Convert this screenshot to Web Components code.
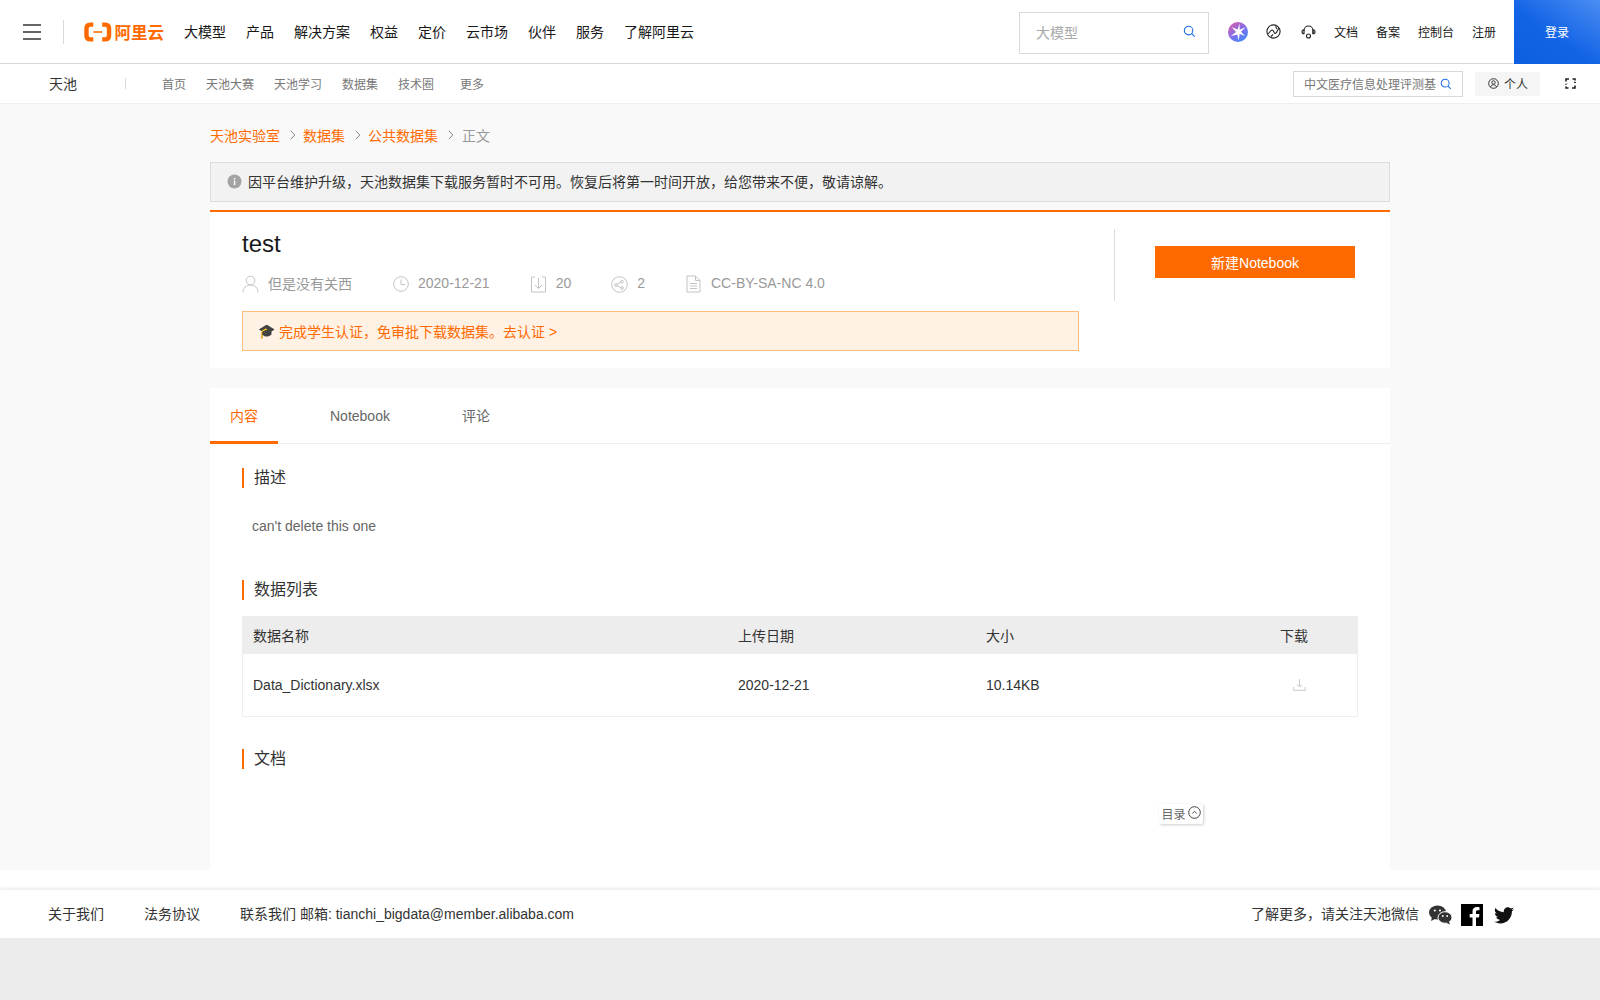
<!DOCTYPE html>
<html lang="zh">
<head>
<meta charset="UTF-8">
<title>天池</title>
<style>
  html, body { margin: 0; padding: 0; }
  body {
    background: #f9f9f9; color: #333; height: 1000px; overflow: hidden;
    font-family: "Liberation Sans", "Noto Sans CJK SC", sans-serif; font-size: 14px;
  }
</style>
</head>
<body>
<ali-topbar></ali-topbar>
<tc-subnav></tc-subnav>
<tc-page>
  <tc-breadcrumb></tc-breadcrumb>
  <tc-notice>因平台维护升级，天池数据集下载服务暂时不可用。恢复后将第一时间开放，给您带来不便，敬请谅解。</tc-notice>
  <ds-header></ds-header>
  <ds-content>
    <ds-section title="描述"><p class="desc">can't delete this one</p></ds-section>
    <ds-section title="数据列表"><ds-table></ds-table></ds-section>
    <ds-section title="文档"></ds-section>
  </ds-content>
</tc-page>
<tc-footer></tc-footer>

<script>
// 공통 아이콘
const searchIcon = (size, color) => `<svg width="${size}" height="${size}" viewBox="0 0 14 14" fill="none" stroke="${color}" stroke-width="1.2"><circle cx="6" cy="6" r="4.6"/><path d="M9.4 9.4L12.6 12.6"/></svg>`;
const chevron = `<svg width="6" height="10" viewBox="0 0 6 10" fill="none" stroke="#888"><path d="M.8.8l4 4.200-4 4.200"/></svg>`;

function define(name, html) {
  customElements.define(name, class extends HTMLElement {
    constructor() {
      super();
      this.attachShadow({ mode: 'open' }).innerHTML = html;
    }
  });
}

// 상단 바
define('ali-topbar', `
  <style>
    :host { display: flex; align-items: center; height: 63px; background: #fff; border-bottom: 1px solid #d9d9d9; color: #181818; }
    .burger { width: 18px; margin-left: 23px; display: flex; flex-direction: column; gap: 5px; }
    .burger i { display: block; height: 2px; background: #666; }
    .sep { width: 1px; height: 24px; background: #d9d9d9; margin: 0 20px 0 22px; }
    .logo { display: flex; align-items: center; gap: 3px; color: #ff6a00; font-size: 16.5px; font-weight: 700; width: 80px; white-space: nowrap; }
    nav { display: flex; gap: 20px; margin-left: 20px; padding-bottom: 1px; }
    .search { margin-left: auto; margin-top: 2px; box-sizing: border-box; width: 190px; height: 42px; border: 1px solid #d9d9d9; display: flex; align-items: center; justify-content: space-between; padding: 0 12px 2px 16px; color: #aaa; }
    .search svg { display: block; }
    .tools { display: flex; align-items: center; margin-left: 19px; }
    .tools svg { display: block; }
    .star { margin-right: 18px; }
    .globe { margin-right: 20px; }
    .head { margin-right: 18px; }
    .links { display: flex; gap: 18px; font-size: 12px; margin-right: 18px; }
    .login { width: 86px; height: 64px; margin-bottom: -1px; padding-bottom: 2px; box-sizing: border-box; display: flex; align-items: center; justify-content: center; color: #fff; font-size: 12px; background: linear-gradient(215deg, #4b8df2 0%, #1263e6 55%, #0d5fe2 100%); }
  </style>
  <div class="burger"><i></i><i></i><i></i></div>
  <div class="sep"></div>
  <div class="logo">
    <svg width="28" height="20" viewBox="0 0 28 20" fill="none"><path d="M9.5 2.5H6.5C4 2.5 2.5 4 2.5 6.5V13.5C2.5 16 4 17.5 6.5 17.5H9.5M18.5 2.5H21.5C24 2.5 25.5 4 25.5 6.5V13.5C25.5 16 24 17.5 21.5 17.5H18.5" stroke="#ff6a00" stroke-width="4.5"/><path d="M9.5 10H18.5" stroke="#ff6a00" stroke-width="1.6"/></svg>
    <span>阿里云</span>
  </div>
  <nav><span>大模型</span><span>产品</span><span>解决方案</span><span>权益</span><span>定价</span><span>云市场</span><span>伙伴</span><span>服务</span><span>了解阿里云</span></nav>
  <div class="search"><span>大模型</span>${searchIcon(13, '#1f6fe5')}</div>
  <div class="tools">
    <svg class="star" width="20" height="20" viewBox="0 0 20 20">
      <defs><linearGradient id="g" x1="0.15" y1="0.1" x2="0.8" y2="1"><stop offset="0" stop-color="#d060b0"/><stop offset="0.5" stop-color="#7f6cf0"/><stop offset="1" stop-color="#3a8df6"/></linearGradient></defs>
      <circle cx="10" cy="10" r="10" fill="url(#g)"/>
      <path d="M11.6 1.5L9.6 7.6 3.6 5 8 10 2.6 14.2 9.3 12.4 10.6 18.4 11.7 12 17 14 13 9.8 17.8 5.2 11.7 7.8Z" fill="#fff"/>
    </svg>
    <svg class="globe" width="15" height="15" viewBox="0 0 15 15" fill="none" stroke="#222" stroke-width="1.1"><circle cx="7.5" cy="7.5" r="6.6"/><path d="M1.5 9.8C3.5 10 4 6 6.2 6S7.5 10 9.5 9.3 11 5 13.3 4.3"/><path d="M9.5 2.5L11 5M5 12.5L7 10.5"/></svg>
    <svg class="head" width="15" height="14" viewBox="0 0 15 14" fill="none" stroke="#222" stroke-width="1.1"><path d="M3 6V5.5a4.5 4.5 0 0 1 9 0V9"/><path d="M3 4.8C1.8 4.8 1 5.7 1 6.8S1.8 8.800 3 8.800ZM12 4.800C13.200 4.800 14 5.700 14 6.800S13.200 8.800 12 8.800Z"/><circle cx="7.5" cy="11" r="2"/></svg>
    <div class="links"><span>文档</span><span>备案</span><span>控制台</span><span>注册</span></div>
  </div>
  <div class="login">登录</div>
`);

// 서브 내비
define('tc-subnav', `
  <style>
    :host { display: flex; align-items: center; height: 39px; background: #fff; border-bottom: 1px solid #eee; font-size: 12px; color: #777; }
    .brand { font-size: 14px; color: #333; margin-left: 49px; width: 76px; padding-bottom: 1px; }
    .sep { width: 1px; height: 11px; background: #d9d9d9; }
    nav { display: flex; gap: 20px; margin-left: 36px; }
    nav .more { margin-left: 6px; }
    .search { margin-left: auto; box-sizing: border-box; width: 170px; height: 26px; border: 1px solid #d9d9d9; display: flex; align-items: center; justify-content: space-between; padding: 0 10px; color: #777; white-space: nowrap; }
    .mine { box-sizing: border-box; width: 65px; height: 24px; margin-left: 12px; background: #f5f5f5; color: #333; display: flex; align-items: center; gap: 5px; padding-left: 13px; }
    .swap { margin: 0 24px 0 25px; }
    svg { display: block; flex: none; }
  </style>
  <div class="brand">天池</div>
  <div class="sep"></div>
  <nav><span>首页</span><span>天池大赛</span><span>天池学习</span><span>数据集</span><span>技术圈</span><span class="more">更多</span></nav>
  <div class="search"><span>中文医疗信息处理评测基</span>${searchIcon(12, '#1f6fe5')}</div>
  <div class="mine">
    <svg width="11" height="11" viewBox="0 0 11 11" fill="none" stroke="#333"><circle cx="5.5" cy="5.5" r="4.8"/><circle cx="5.5" cy="4.5" r="1.7"/><path d="M2.5 9c.6-1.5 1.6-2.2 3-2.2S7.900 7.500 8.500 9"/></svg>
    <span>个人</span>
  </div>
  <svg class="swap" width="11" height="11" viewBox="0 0 11 11" fill="none" stroke="#222" stroke-width="1.6"><path d="M1 3.5V1h3M7.500 1H10v1.500M10 7.500V10H7M3.500 10H1V8.500"/><path d="M0 5.500l1 1.200 1-1.200M9 5l1-1.200L11 5" stroke-width="1"/></svg>
`);

// 페이지 본문 폭
define('tc-page', `
  <style>
    :host { display: block; width: 1180px; margin-left: 210px; height: 766px; }
  </style>
  <slot></slot>
`);

define('tc-breadcrumb', `
  <style>
    :host { display: flex; align-items: center; height: 20px; padding-top: 21px; padding-bottom: 17px; color: #ff6a00; }
    svg { display: block; margin: 0 7px 0 10px; }
    .cur { color: #999; margin-left: 1px; }
  </style>
  <span>天池实验室</span>${chevron}<span>数据集</span>${chevron}<span>公共数据集</span>${chevron}<span class="cur">正文</span>
`);

define('tc-notice', `
  <style>
    :host { display: flex; align-items: center; box-sizing: border-box; height: 40px; background: #f2f2f2; border: 1px solid #ddd; padding: 0 0 2px 16px; gap: 6px; color: #333; }
    svg { display: block; margin-top: 1px; }
  </style>
  <svg width="15" height="15" viewBox="0 0 15 15"><circle cx="7.5" cy="7.5" r="7" fill="#a3a3a3"/><rect x="6.8" y="6.5" width="1.5" height="4.5" fill="#fff"/><rect x="6.8" y="4" width="1.5" height="1.5" fill="#fff"/></svg>
  <slot></slot>
`);

// 데이터셋 헤더 카드
define('ds-header', `
  <style>
    :host { display: flex; box-sizing: border-box; height: 158px; margin-top: 8px; background: #fff; border-top: 2px solid #ff6a00; padding-left: 32px; }
    .left { width: 837px; }
    h1 { margin: 0; padding-top: 18px; font-size: 24px; font-weight: 400; line-height: 28px; color: #181818; }
    .meta { display: flex; gap: 40px; margin-top: 15px; height: 22px; color: #999; }
    .meta div { display: flex; align-items: center; gap: 9px; }
    .meta div:first-child { margin-right: 1px; }
    .meta span { padding-bottom: 2px; }
    .meta svg { display: block; }
    .cert { box-sizing: border-box; height: 40px; margin-top: 16px; background: #fff2e5; border: 1px solid #ffbd80; color: #ff6a00; display: flex; align-items: center; padding: 0 0 1px 15px; gap: 4px; }
    .cap { color: #333; }
    .right { margin-left: 35px; margin-top: 17px; height: 72px; border-left: 1px solid #ddd; padding-left: 40px; }
    .btn { width: 200px; height: 32px; box-sizing: border-box; padding-bottom: 1px; margin-top: 17px; background: #ff6a00; color: #fff; display: flex; align-items: center; justify-content: center; }
  </style>
  <div class="left">
    <h1>test</h1>
    <div class="meta">
      <div><svg width="17" height="18" viewBox="0 0 17 18" fill="none" stroke="#c4c4c4"><circle cx="8.5" cy="5.5" r="4.3"/><path d="M1 17.5c0-4.5 3-7.5 7.5-7.5s7.5 3 7.5 7.5"/></svg><span>但是没有关西</span></div>
      <div><svg width="16" height="16" viewBox="0 0 16 16" fill="none" stroke="#c4c4c4"><circle cx="8" cy="8" r="7.3"/><path d="M8 3.5V8.5H12"/></svg><span>2020-12-21</span></div>
      <div><svg width="17" height="18" viewBox="0 0 17 18" fill="none" stroke="#c4c4c4"><path d="M5 2H1.5V17H15.5V2H12"/><path d="M8.5 3V13.5M5 10l3.5 3.5L12 10"/></svg><span>20</span></div>
      <div><svg width="17" height="17" viewBox="0 0 17 17" fill="none" stroke="#c4c4c4"><circle cx="8.5" cy="8.5" r="7.8"/><circle cx="5" cy="9" r="1.3"/><circle cx="11" cy="5.5" r="1.3"/><circle cx="11" cy="12" r="1.3"/><path d="M6 8.3l4-2.2M6 9.8l4 1.7"/></svg><span>2</span></div>
      <div><svg width="17" height="18" viewBox="0 0 17 18" fill="none" stroke="#c4c4c4"><path d="M2 1H10.5L15 5.5V17H2Z"/><path d="M10.5 1V5.5H15M5 8.5H12M5 11H12M5 13.5H12"/></svg><span>CC-BY-SA-NC 4.0</span></div>
    </div>
    <div class="cert"><span class="cap">🎓</span><span>完成学生认证，免审批下载数据集。去认证 &gt;</span></div>
  </div>
  <div class="right"><div class="btn">新建Notebook</div></div>
`);

// 탭 + 내용 카드
define('ds-content', `
  <style>
    :host { display: block; position: relative; height: 482px; margin-top: 20px; background: #fff; }
    .tabs { display: flex; height: 56px; box-sizing: border-box; border-bottom: 1px solid #eee; color: #666; }
    .tabs span { display: flex; align-items: center; height: 56px; box-sizing: border-box; }
    .tabs .on { width: 68px; justify-content: center; color: #ff6a00; border-bottom: 3px solid #ff6a00; padding-top: 1px; }
    .tabs .nb { margin-left: 52px; }
    .tabs .cm { margin-left: 72px; padding-bottom: 2px; }
    .toc { position: absolute; left: 949px; top: 416px; width: 44px; height: 20px; box-sizing: border-box; padding-bottom: 1px; display: flex; align-items: center; justify-content: center; gap: 2px; font-size: 12px; color: #666; box-shadow: 1px 1px 3px rgba(0,0,0,.2); border-radius: 2px; }
    svg { display: block; margin-top: -2px; }
    ::slotted(ds-section) { margin-left: 32px; }
  </style>
  <div class="tabs"><span class="on">内容</span><span class="nb">Notebook</span><span class="cm">评论</span></div>
  <slot></slot>
  <div class="toc"><span>目录</span><svg width="13" height="13" viewBox="0 0 13 13" fill="none" stroke="#444"><circle cx="6.5" cy="6.5" r="5.8"/><path d="M4.3 7.5L6.5 5.3 8.7 7.5"/></svg></div>
`);

customElements.define('ds-section', class extends HTMLElement {
  constructor() {
    super();
    this.attachShadow({ mode: 'open' }).innerHTML = `
      <style>
        :host { display: block; padding-top: 24px; width: 1116px; }
        h2 { margin: 0; height: 20px; line-height: 20px; box-sizing: border-box; border-left: 2px solid #ff6a00; padding-left: 10px; font-size: 16px; font-weight: 400; color: #333; }
        ::slotted(.desc) { margin: 27px 0 0 10px; line-height: 22px; color: #666; height: 41px; }
        ::slotted(ds-table) { margin: 16px 0 8px; }
      </style>
      <h2></h2>
      <slot></slot>`;
    this.shadowRoot.querySelector('h2').textContent = this.getAttribute('title');
  }
});

define('ds-table', `
  <style>
    :host { display: block; }
    .row { display: grid; grid-template-columns: 485px 248px 294px 1fr; align-items: center; box-sizing: border-box; padding-left: 11px; }
    .head { height: 38px; background: #ededed; color: #333; padding-bottom: 1px; }
    .body { height: 63px; border: 1px solid #eee; border-top: 0; padding-left: 10px; color: #333; }
    svg { display: block; margin-left: 13px; }
  </style>
  <div class="row head"><span>数据名称</span><span>上传日期</span><span>大小</span><span>下载</span></div>
  <div class="row body"><span>Data_Dictionary.xlsx</span><span>2020-12-21</span><span style="margin-right:-1px">10.14KB</span><span><svg width="13" height="12" viewBox="0 0 13 12" fill="none" stroke="#c9c9c9"><path d="M6.5 0V7.5M4 5.500l2.500 2.500L9 5.500M.7 8V11.300H12.300V8"/></svg></span></div>
`);

// 푸터
define('tc-footer', `
  <style>
    :host { display: block; background: #fff; padding-top: 20px; }
    .bar { height: 48px; background: #fff; box-shadow: 0 -2px 3px rgba(0,0,0,.07); display: flex; align-items: center; padding-left: 48px; color: #333; }
    .links { display: flex; gap: 40px; padding-bottom: 2px; }
    .follow { margin-left: auto; margin-top: 2px; display: flex; align-items: center; margin-right: 86px; }
    .follow span { padding-bottom: 4px; }
    svg { display: block; }
    .wc { margin-left: 10px; }
    .fb { margin-left: 9px; }
    .tw { margin-left: 11px; }
    .rest { height: 62px; background: #ececec; }
  </style>
  <div class="bar">
    <div class="links"><span>关于我们</span><span>法务协议</span><span>联系我们 邮箱: tianchi_bigdata@member.alibaba.com</span></div>
    <div class="follow">
      <span>了解更多，请关注天池微信</span>
      <svg class="wc" width="23" height="20" viewBox="0 0 23 20" fill="#333"><ellipse cx="8.5" cy="7.5" rx="8.5" ry="7"/><path d="M3 12l-1 4 5-2.500Z"/><ellipse cx="16" cy="12.5" rx="7" ry="5.8" stroke="#fff"/><path d="M20 16.5l1 3-4-1.800Z"/><circle cx="5.8" cy="5.5" r="1.1" fill="#fff"/><circle cx="11" cy="5.5" r="1.1" fill="#fff"/><circle cx="13.8" cy="11" r=".9" fill="#fff"/><circle cx="18.2" cy="11" r=".9" fill="#fff"/></svg>
      <svg class="fb" width="22" height="22" viewBox="0 0 22 22"><rect width="22" height="22" fill="#000"/><path d="M15 22V13.5H18L18.400 10H15V8C15 7 15.400 6.300 16.700 6.300H18.500V3.200C18 3.100 17 3 15.900 3 13.300 3 11.500 4.600 11.500 7.500V10H8.700V13.500H11.500V22Z" fill="#fff"/></svg>
      <svg class="tw" width="20" height="17" viewBox="0 0 24 20" fill="#111"><path d="M24 2.400c-.9.400-1.800.7-2.800.8 1-.6 1.800-1.600 2.200-2.700-1 .6-2 1-3.100 1.200C19.300.7 18 0 16.600 0c-2.700 0-4.900 2.200-4.900 4.900 0 .4 0 .8.100 1.100C7.700 5.800 4.100 3.900 1.700.9c-.4.700-.7 1.600-.7 2.500 0 1.700.9 3.200 2.200 4.100-.8 0-1.600-.2-2.200-.6v.1c0 2.400 1.700 4.400 3.900 4.800-.4.100-.8.200-1.300.2-.3 0-.6 0-.9-.1.600 2 2.400 3.400 4.600 3.400-1.700 1.300-3.800 2.100-6.100 2.100-.4 0-.8 0-1.200-.1C2.200 18.700 4.800 19.500 7.500 19.500c9.100 0 14-7.500 14-14v-.6c1-.7 1.800-1.600 2.500-2.500z"/></svg>
    </div>
  </div>
  <div class="rest"></div>
`);
</script>
</body>
</html>
